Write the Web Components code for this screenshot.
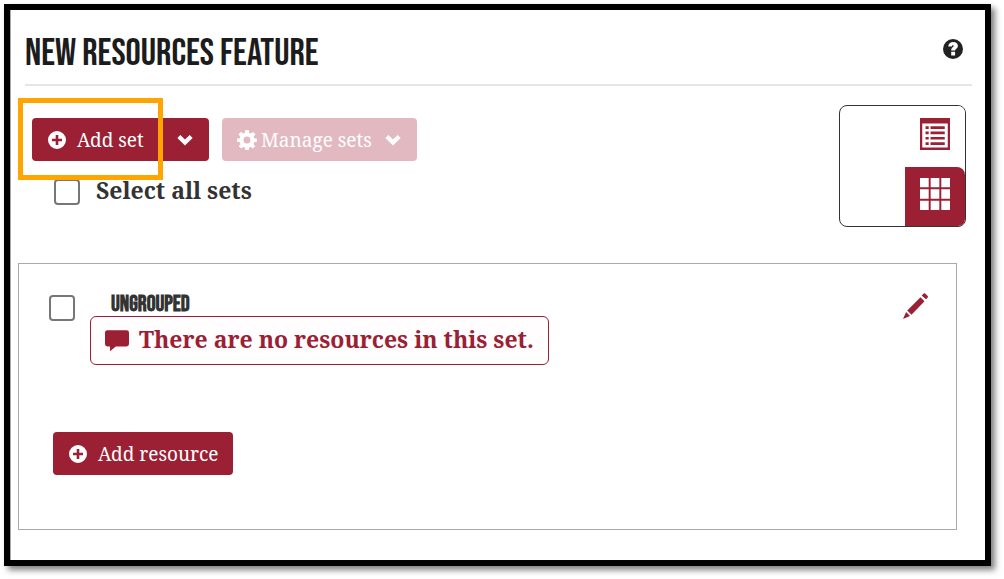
<!DOCTYPE html>
<html lang="en">
<head>
<meta charset="utf-8">
<title>New Resources Feature</title>
<style>
  :root {
    --brand: #9b2033;
    --ink: #222;
    --serif: "Noto Serif", "DejaVu Serif Condensed", "DejaVu Serif", serif;
    --display: "Bebas Neue", "Liberation Sans Narrow", "Liberation Sans", sans-serif;
  }
  body { margin: 0; background: #fff; color: var(--ink); font-family: var(--serif); font-size: 19px; }
</style>
</head>
<body>
<resource-page></resource-page>

<script>
const define = (name, html) => {
  const template = document.createElement('template');
  template.innerHTML = `<style>*{box-sizing:border-box}</style>` + html;
  customElements.define(name, class extends HTMLElement {
    constructor() {
      super();
      this.attachShadow({ mode: 'open' }).append(template.content.cloneNode(true));
      const glyph = this.shadowRoot.querySelector('[data-glyph]');
      if (glyph) glyph.innerHTML = GLYPHS[this.getAttribute('name')];
      const control = this.shadowRoot.querySelector('[data-control]');
      if (control && this.hasAttribute('disabled')) control.disabled = true;
      if (control && this.hasAttribute('label')) control.setAttribute('aria-label', this.getAttribute('label'));
    }
  });
};

const GLYPHS = {
  plus: '<path fill-rule="evenodd" d="M10 1a9 9 0 1 0 0 18 9 9 0 0 0 0-18zM8.700 5h2.600v3.700h3.700v2.600h-3.700v3.700H8.700v-3.700H5V8.700h3.700z"/>',
  chevron: '<path d="M4.800 4.500L10 9.500l5.200-5L18.500 7.700 10 16 1.500 7.700z"/>',
  gear: '<path fill-rule="evenodd" d="M8.300 0h3.400l.5 3 1.500.6L16.200 2l2.300 2.300-1.900 2.400.6 1.500 2.800.5v3.100l-2.800.5-.7 1.600 1.700 2.300-2.300 2.300-2.300-1.600-1.400.6-.5 2.800H8.300l-.5-2.800-1.400-.6-2.300 1.600-2.300-2.300 1.700-2.300-.7-1.600L0 11.800V8.700l2.800-.5.6-1.500-1.900-2.400L3.800 2l2.500 1.600 1.500-.6zM10 6.500a3.500 3.500 0 1 0 0 7 3.500 3.500 0 0 0 0-7z"/>',
  help: '<path fill-rule="evenodd" d="M10 0a10 10 0 1 0 0 20 10 10 0 0 0 0-20zM5.300 7.500C5.500 4.600 7.300 3 10.200 3c2.800 0 4.700 1.500 4.700 3.800 0 1.600-.8 2.400-1.800 3.200-.7.600-1 .9-1 1.500H8.200c0-1.800.5-2.500 1.500-3.300.7-.6 1-.8 1-1.300s-.3-.7-.8-.7c-.6 0-1 .4-1.100 1.300zM8.200 12.700h3.900v3.800H8.200z"/>',
  comment: '<path d="M2 1h16a2 2 0 0 1 2 2v9.500a2 2 0 0 1-2 2H9L4.200 18.500V14.500H2a2 2 0 0 1-2-2V3a2 2 0 0 1 2-2z"/>',
  pencil: '<path d="M15.600 1.300l.8-.8c.5-.5 1-.5 1.500 0l1.700 1.700c.5.5.5 1 0 1.500l-1.200 1.200-3.500-2.900zM14 3.200L17.200 6.400 6.800 16.800 3.400 13.400zM2.500 14.600l3.100 3.100L0 20z"/>',
  list: '<path fill-rule="evenodd" d="M0 0h20v20H0zM1.500 3.400v15.100h17V3.400z"/><path d="M3.700 5.200h2.100v1.600H3.700zm3.300 0h9.500v1.600H7zM3.700 8.500h2.100v1.600H3.700zm3.300 0h9.500v1.600H7zM3.700 11.900h2.100v1.600H3.700zm3.300 0h9.500v1.600H7zM3.700 15.200h2.100v1.600H3.700zm3.300 0h9.500v1.600H7z"/>',
  grid: '<path d="M0 0h5.800v5.800H0zM7.100 0h5.800v5.800H7.100zM14.200 0H20v5.800h-5.800zM0 7.100h5.800v5.800H0zM7.100 7.100h5.800v5.800H7.100zM14.200 7.100H20v5.800h-5.800zM0 14.200h5.800V20H0zM7.100 14.200h5.800V20H7.100zM14.200 14.200H20V20h-5.800z"/>'
};

define('ui-icon', `
<style>
  :host { display: block; flex: none; width: 20px; height: 20px; }
  svg { display: block; width: 100%; height: 100%; fill: currentColor; }
</style>
<svg data-glyph viewBox="0 0 20 20" preserveAspectRatio="none" aria-hidden="true"></svg>`);

define('ui-button', `
<style>
  :host { display: block; }
  button {
    display: flex; align-items: center; gap: var(--button-gap, 10px);
    height: 43px; min-width: var(--button-min, 0); padding: 0 15px; border: 0;
    border-radius: var(--button-radius, 4px);
    background: var(--brand); color: #fff; font: inherit; white-space: nowrap;
  }
  button:disabled { background: #e2b9c1; }
</style>
<button type="button" data-control><slot></slot></button>`);

define('ui-icon-button', `
<style>
  :host { display: block; }
  button { display: flex; padding: 0; border: 0; background: none; color: inherit; }
</style>
<button type="button" data-control><slot></slot></button>`);

define('ui-check', `
<style>
  :host { display: block; }
  label { display: flex; align-items: center; gap: var(--check-gap, 16px); font-size: 23px; font-weight: bold; line-height: 26px; color: #333; }
  input { appearance: none; flex: none; width: 26px; height: 26px; margin: 0; border: 2px solid #777; border-radius: 4px; background: #fff; }
  span { padding-bottom: 4px; }
</style>
<label><input type="checkbox" data-control><span><slot></slot></span></label>`);

define('view-switch', `
<style>
  :host { display: flex; flex-direction: column; align-items: flex-end; width: 127px; border: 1px solid #333; border-radius: 8px; overflow: hidden; }
  button { display: grid; place-items: center; width: 60px; height: 61px; padding: 0 0 6px; border: 0; background: #fff; color: var(--brand); }
  button[aria-pressed=true] { height: 59px; background: var(--brand); color: #fff; border-radius: 0 8px 0 0; }
  ui-icon { width: 30px; height: 32px; }
</style>
<button type="button" aria-label="List view" aria-pressed="false"><ui-icon name="list"></ui-icon></button>
<button type="button" aria-label="Grid view" aria-pressed="true"><ui-icon name="grid"></ui-icon></button>`);

define('page-header', `
<style>
  :host { display: flex; align-items: center; justify-content: space-between; height: 76px; margin: 0 13px 0 15px; padding: 4px 9px 0 0; border-bottom: 2px solid #e6e6e6; }
  h1 { margin: 0; padding-top: 10px; font-family: var(--display); font-size: 38px; line-height: 40px; font-weight: normal; text-transform: uppercase; color: #1c1c1c; }
</style>
<h1><slot></slot></h1>
<ui-icon-button label="Help"><ui-icon name="help"></ui-icon></ui-icon-button>`);

define('set-toolbar', `
<style>
  :host { display: flex; justify-content: space-between; align-items: flex-start; padding: 19px 19px 0 22px; }
  .actions { display: flex; gap: 13px; padding-top: 13px; }
  .split { display: flex; position: relative; }
  .split ui-button:first-child { --button-radius: 4px 0 0 4px; --button-min: 129px; }
  .more { --button-radius: 0 4px 4px 0; }
  .mark { position: absolute; inset: -20px 46px -19px -14px; border: 5px solid #ffa500; z-index: 1; pointer-events: none; }
  ui-check { padding: 16px 0 0 22px; }
  ui-icon[name=chevron] { width: 18px; height: 18px; }
  .manage { --button-gap: 4px; }
  .manage ui-icon[name=chevron] { margin-left: 8px; }
</style>
<div>
  <div class="actions">
    <div class="split">
      <ui-button><ui-icon name="plus"></ui-icon>Add set</ui-button>
      <ui-button class="more" label="More ways to add"><ui-icon name="chevron"></ui-icon></ui-button>
      <div class="mark"></div>
    </div>
    <ui-button class="manage" disabled><ui-icon name="gear"></ui-icon>Manage sets<ui-icon name="chevron"></ui-icon></ui-button>
  </div>
  <ui-check>Select all sets</ui-check>
</div>
<view-switch></view-switch>`);

define('ui-notice', `
<style>
  :host { display: flex; align-items: center; gap: 10px; height: 49px; padding: 0 14px; border: 1px solid var(--brand); border-radius: 6px; background: #fffdfd; color: var(--brand); font-size: 23px; line-height: 32px; font-weight: bold; white-space: nowrap; }
  ui-icon { width: 24px; height: 24px; }
  span { padding-bottom: 4px; }
</style>
<ui-icon name="comment"></ui-icon><span><slot></slot></span>`);

define('resource-set', `
<style>
  :host { display: block; margin: 36px 28px 30px 8px; padding: 28px 28px 54px 30px; border: 1px solid #aaa; }
  .row { display: flex; align-items: flex-start; }
  ui-check { --check-gap: 0; padding-top: 3px; }
  .body { flex: 1; display: flex; flex-direction: column; align-items: flex-start; padding-left: 15px; }
  h2 { margin: 0; padding: 2px 0 0 21px; font-family: var(--display); font-size: 22px; line-height: 22px; font-weight: bold; text-transform: uppercase; color: #333; }
  ui-icon-button { padding-top: 1px; color: var(--brand); }
  ui-icon { width: 25px; height: 26px; }
  .add { display: flex; padding: 67px 0 0 4px; }
  .add ui-icon { width: 20px; height: 20px; }
</style>
<div class="row">
  <ui-check label="Select set Ungrouped"></ui-check>
  <div class="body">
    <h2><slot></slot></h2>
    <ui-notice>There are no resources in this set.</ui-notice>
  </div>
  <ui-icon-button label="Edit set"><ui-icon name="pencil"></ui-icon></ui-icon-button>
</div>
<div class="add"><ui-button><ui-icon name="plus"></ui-icon>Add resource</ui-button></div>`);

define('resource-page', `
<style>
  :host { display: block; padding: 4px 13px 13px 4px; }
  main { min-height: calc(100vh - 17px); border: 6px solid #000; background: #fff; box-shadow: 4px 4px 6px rgba(0,0,0,.5), inset 1px 0 #aaa; }
</style>
<main>
  <page-header>New Resources Feature</page-header>
  <set-toolbar></set-toolbar>
  <resource-set>Ungrouped</resource-set>
</main>`);
</script>
</body>
</html>
